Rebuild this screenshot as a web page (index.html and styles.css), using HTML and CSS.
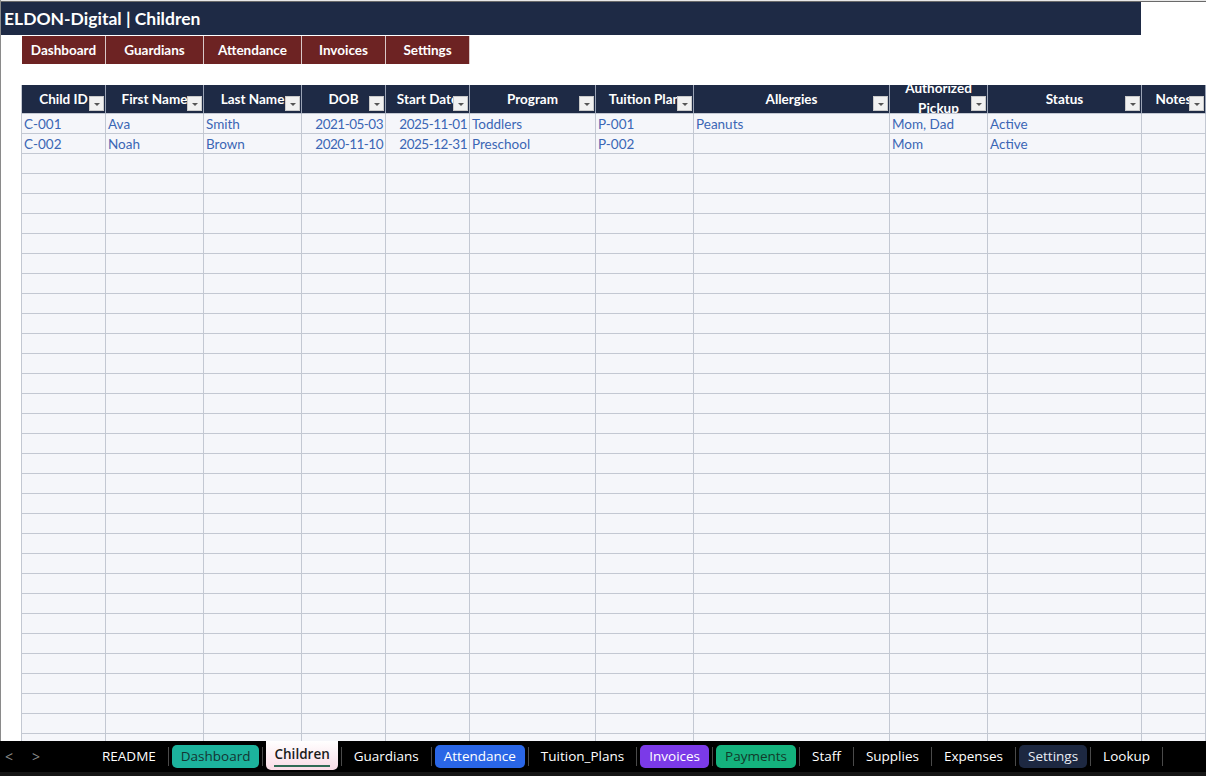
FILE: index.html
```html
<!DOCTYPE html>
<html>
<head>
<meta charset="utf-8">
<link rel="stylesheet" href="styles.css">
</head>
<body>
<div class="app">
  <div class="sheet">
    <div class="toprule"></div>
    <div class="title">ELDON-Digital | Children</div>
    <div class="nav">
      <div class="navbtn w1">Dashboard</div>
      <div class="navbtn w2">Guardians</div>
      <div class="navbtn w3">Attendance</div>
      <div class="navbtn w4">Invoices</div>
      <div class="navbtn w5">Settings</div>
    </div>
    <div class="table" id="table">
      <div class="th">Child ID<span class="flt"></span></div>
      <div class="th">First Name<span class="flt"></span></div>
      <div class="th">Last Name<span class="flt"></span></div>
      <div class="th">DOB<span class="flt"></span></div>
      <div class="th">Start Date<span class="flt"></span></div>
      <div class="th">Program<span class="flt"></span></div>
      <div class="th">Tuition Plan<span class="flt"></span></div>
      <div class="th">Allergies<span class="flt"></span></div>
      <div class="th wrap"><span class="two">Authorized Pickup</span><span class="flt"></span></div>
      <div class="th">Status<span class="flt"></span></div>
      <div class="th">Notes<span class="flt"></span></div>

      <div class="td">C-001</div><div class="td">Ava</div><div class="td">Smith</div><div class="td r">2021-05-03</div><div class="td r">2025-11-01</div><div class="td">Toddlers</div><div class="td">P-001</div><div class="td">Peanuts</div><div class="td">Mom, Dad</div><div class="td">Active</div><div class="td"></div>
      <div class="td">C-002</div><div class="td">Noah</div><div class="td">Brown</div><div class="td r">2020-11-10</div><div class="td r">2025-12-31</div><div class="td">Preschool</div><div class="td">P-002</div><div class="td"></div><div class="td">Mom</div><div class="td">Active</div><div class="td"></div>
    </div>
  </div>
  <div class="tabbar">
    <span class="arrow">&lt;</span>
    <span class="arrow a2">&gt;</span>
    <div class="tabs">
      <span class="tab">README</span><span class="sep"></span>
      <span class="tab pill teal">Dashboard</span><span class="sep"></span>
      <span class="tab active"><span class="ul">Children</span></span><span class="sep"></span>
      <span class="tab">Guardians</span><span class="sep"></span>
      <span class="tab pill blue">Attendance</span><span class="sep"></span>
      <span class="tab">Tuition_Plans</span><span class="sep"></span>
      <span class="tab pill purple">Invoices</span><span class="sep"></span>
      <span class="tab pill green">Payments</span><span class="sep"></span>
      <span class="tab">Staff</span><span class="sep"></span>
      <span class="tab">Supplies</span><span class="sep"></span>
      <span class="tab">Expenses</span><span class="sep"></span>
      <span class="tab pill navy">Settings</span><span class="sep"></span>
      <span class="tab">Lookup</span><span class="sep"></span>
    </div>
  </div>
</div>
<script>
  var t = document.getElementById('table');
  for (var i = 0; i < 31 * 11; i++) {
    var d = document.createElement('div');
    d.className = 'td';
    t.appendChild(d);
  }
</script>
</body>
</html>
```

FILE: styles.css
```css
* { box-sizing: border-box; }
html, body { margin: 0; padding: 0; }
body {
  width: 1206px;
  height: 776px;
  overflow: hidden;
  background: #ffffff;
  font-family: Lato, "Liberation Sans", sans-serif;
}
.app { display: flex; flex-direction: column; height: 776px; }
.sheet {
  height: 741px;
  overflow: hidden;
  border-left: 1px solid #8a8a8a;
  display: flex;
  flex-direction: column;
}
.toprule {
  height: 2px;
  flex: none;
  border-bottom: 1px solid #6a6a6a;
  background: #e8e8e8;
}
.title {
  flex: none;
  width: 1140px;
  height: 33px;
  background: #1e2a45;
  color: #ffffff;
  font-weight: 700;
  font-size: 17.5px;
  line-height: 33px;
  padding-left: 3px;
}
.nav {
  flex: none;
  display: flex;
  margin-top: 1px;
  margin-left: 21px;
  height: 28px;
}
.navbtn {
  background: #6d2323;
  color: #ffffff;
  font-weight: 700;
  font-size: 13.5px;
  display: flex;
  align-items: center;
  justify-content: center;
  border-right: 1px solid #d9c8c8;
}
.w1 { width: 84px; }
.w2 { width: 98px; }
.w3 { width: 98px; }
.w4 { width: 84px; }
.w5 { width: 84px; }
.table {
  flex: none;
  margin-top: 21px;
  margin-left: 20px;
  display: grid;
  grid-template-columns: 84px 98px 98px 84px 84px 126px 98px 196px 98px 154px 64px;
  grid-template-rows: 29px;
  grid-auto-rows: 20px;
  border-left: 1px solid #c3c8d2;
}
.th {
  position: relative;
  height: 29px;
  background: #1e2a45;
  color: #ffffff;
  font-weight: 700;
  font-size: 13.5px;
  display: flex;
  align-items: center;
  justify-content: center;
  white-space: nowrap;
  overflow: hidden;
  border-right: 1px solid #9aa3b5;
  border-bottom: 1px solid #c3c8d2;
  padding-bottom: 1px;
}
.th.wrap { white-space: normal; }
.two {
  display: block;
  width: 80px;
  text-align: center;
  line-height: 20px;
  margin-top: -1px;
}
.flt {
  position: absolute;
  right: 1px;
  bottom: 2px;
  width: 15px;
  height: 15px;
  background: #f1f1f1;
  border: 1px solid #c9c9c9;
}
.flt::after {
  content: "";
  position: absolute;
  left: 4px;
  top: 6px;
  border-left: 3px solid transparent;
  border-right: 3px solid transparent;
  border-top: 3px solid #555555;
}
.td {
  background: #f5f6fa;
  border-right: 1px solid #c3c8d2;
  border-bottom: 1px solid #c3c8d2;
  color: #3b66b5;
  font-size: 13.5px;
  line-height: 20px;
  padding: 0 2px;
  white-space: nowrap;
  overflow: hidden;
}
.td.r { text-align: right; letter-spacing: -0.5px; }

.tabbar {
  flex: none;
  height: 35px;
  background: #000000;
  border-bottom: 4px solid #161616;
  display: flex;
  align-items: flex-start;
  font-family: "Open Sans", "Noto Sans", sans-serif;
  font-size: 13.5px;
}
.arrow {
  color: #8a8a8a;
  font-size: 14px;
  line-height: 31px;
  margin-left: 5px;
  width: 27px;
}
.a2 { margin-left: 0; width: 30px; }
.tabs {
  display: flex;
  align-items: center;
  height: 31px;
  margin-left: 31px;
}
.tab {
  color: #ffffff;
  padding: 0 9px;
  height: 23px;
  line-height: 23px;
  border-radius: 5px;
  white-space: nowrap;
}
.sep {
  width: 1px;
  height: 19px;
  background: #4a4a4a;
  margin: 0 3px;
}
.teal { background: #1cb39d; color: #143532; }
.blue { background: #2a66e6; color: #ffffff; }
.purple { background: #7b3ae8; color: #ffffff; }
.green { background: #14b27d; color: #123a2a; }
.navy { background: #1d2841; color: #e8ecf4; }
.active {
  align-self: flex-start;
  height: 29px;
  line-height: 27px;
  background: linear-gradient(#ffffff, #f9dbe6);
  color: #1a1a1a;
  font-weight: 600;
  border-radius: 0 0 5px 5px;
  padding: 0 8px;
}
.ul {
  display: inline-block;
  line-height: 22px;
  border-bottom: 2px solid #2f6a55;
}
```
